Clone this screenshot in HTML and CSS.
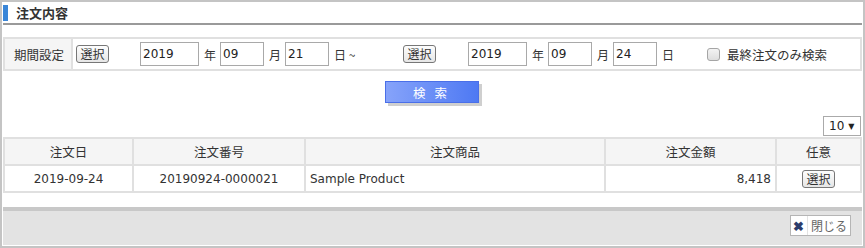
FILE: index.html
```html
<!DOCTYPE html>
<html lang="ja">
<head>
  <meta charset="UTF-8">
  <title>注文内容</title>
  <link rel="stylesheet" href="styles.css">
</head>
<body>
<div class="panel">
  <h2 class="panel-title">注文内容</h2>

  <div class="search">
    <div class="search-label">期間設定</div>
    <div class="search-fields">
      <button class="btn-pick">選択</button>
      <span class="date from">
        <input class="in-year" value="2019"><span class="unit">年</span>
        <input class="in-md" value="09"><span class="unit">月</span>
        <input class="in-md" value="21"><span class="unit end">日 ~</span>
      </span>
      <button class="btn-pick">選択</button>
      <span class="date to">
        <input class="in-year" value="2019"><span class="unit">年</span>
        <input class="in-md" value="09"><span class="unit">月</span>
        <input class="in-md" value="24"><span class="unit end">日</span>
      </span>
      <label class="last-only"><i class="chk"></i>最終注文のみ検索</label>
    </div>
  </div>

  <div class="search-action">
    <button class="btn-search">検 索</button>
  </div>

  <div class="pager">
    <span class="per-page">10 <b>&#9660;</b></span>
  </div>

  <table class="orders">
    <thead>
      <tr>
        <th class="c-date">注文日</th>
        <th class="c-no">注文番号</th>
        <th class="c-item">注文商品</th>
        <th class="c-price">注文金額</th>
        <th class="c-opt">任意</th>
      </tr>
    </thead>
    <tbody>
      <tr>
        <td class="center">2019-09-24</td>
        <td class="center">20190924-0000021</td>
        <td>Sample Product</td>
        <td class="right">8,418</td>
        <td class="center"><button class="btn-pick small">選択</button></td>
      </tr>
    </tbody>
  </table>

  <div class="footer">
    <button class="btn-close"><span class="x">&#10006;</span><span class="lbl">閉じる</span></button>
  </div>
</div>
</body>
</html>
```

FILE: styles.css
```css
* {
  box-sizing: border-box;
}

body {
  margin: 0;
  font-family: "Noto Sans CJK JP", "Noto Sans", sans-serif;
  font-size: 12px;
  color: #333;
  background: #fff;
}

.panel {
  width: 865px;
  height: 248px;
  border: 2px solid #c4c4c4;
  padding: 0 1px;
  display: flex;
  flex-direction: column;
}

.panel-title {
  margin: 3px 0 0;
  height: 20px;
  font-size: 13px;
  font-weight: bold;
  line-height: 16px;
  padding-left: 13px;
  position: relative;
  border-bottom: 2px solid #9a9a9a;
}
.panel-title::before {
  content: "";
  position: absolute;
  left: 0;
  top: 0;
  width: 5px;
  height: 16px;
  background: #3a86d8;
}

/* search box */
.search {
  margin-top: 12px;
  height: 34px;
  border: 2px solid #e0e0e0;
  display: flex;
  align-items: stretch;
  white-space: nowrap;
}
.search-label {
  width: 68px;
  flex: none;
  background: #f5f5f5;
  border-right: 2px solid #e0e0e0;
  display: flex;
  align-items: center;
  padding-left: 9px;
  font-size: 12.5px;
}
.search-fields {
  display: flex;
  align-items: center;
  flex: 1;
  padding-left: 3px;
}

.btn-pick {
  flex: none;
  font-family: inherit;
  font-size: 12px;
  color: #333;
  height: 18px;
  width: 33px;
  padding: 0;
  line-height: 14px;
  border: 1px solid #777;
  border-radius: 3px;
  background: linear-gradient(#fdfdfd, #e6e6e6);
}

.date {
  display: flex;
  align-items: center;
  flex: none;
  margin-left: 31px;
}
.date.to {
  margin-left: 32px;
}
.date input {
  font-family: "DejaVu Sans", sans-serif;
  font-size: 12px;
  color: #222;
  height: 24px;
  border: 1px solid #a9a9a9;
  padding: 0 2px;
  margin: 0;
}
.in-year {
  width: 59px;
}
.in-md {
  width: 44px;
}
.unit {
  width: 21px;
  padding-left: 5px;
  font-size: 12px;
}
.from .end {
  width: 74px;
}
.to .end {
  width: 50px;
}

.last-only {
  display: flex;
  align-items: center;
  font-size: 12.5px;
}
.chk {
  width: 13px;
  height: 13px;
  border: 1px solid #a5a5a5;
  border-radius: 3px;
  background: linear-gradient(#f3f3f3, #dedede);
  margin-right: 7px;
}

.search-action {
  display: flex;
  justify-content: center;
  margin-top: 10px;
  padding-right: 2px;
}
.btn-search {
  width: 94px;
  height: 22px;
  border: 1px solid #4a6fe8;
  background: linear-gradient(to right, #86a3fa, #4e79f3);
  color: #fff;
  font-family: inherit;
  font-size: 12.5px;
  letter-spacing: 3px;
  padding: 0;
  box-shadow: 3px 3px 0 #cfcfcf;
}

.pager {
  display: flex;
  justify-content: flex-end;
  margin-top: 13px;
  padding-right: 1px;
}
.per-page {
  width: 38px;
  height: 20px;
  border: 1px solid #aaa;
  display: flex;
  align-items: center;
  padding-left: 5px;
  font-family: "DejaVu Sans", sans-serif;
  font-size: 12px;
  color: #222;
}
.per-page b {
  font-size: 8px;
  margin-left: 4px;
}

/* orders table */
.orders {
  margin-top: 1px;
  border-collapse: collapse;
  width: 859px;
}
.orders th,
.orders td {
  border: 2px solid #e0e0e0;
  height: 27px;
  padding: 0 4px;
  font-weight: normal;
}
.orders th {
  background: #f5f5f5;
  font-size: 12.5px;
}
.orders td {
  font-family: "DejaVu Sans", "Noto Sans CJK JP", sans-serif;
  font-size: 12px;
}
.c-date { width: 129px; }
.c-no { width: 172px; }
.c-item { width: 300px; }
.c-price { width: 171px; }
.orders .center { text-align: center; }
.orders .right { text-align: right; }
.btn-pick.small {
  font-family: "Noto Sans CJK JP", sans-serif;
}

.footer {
  margin-top: 14px;
  flex: 1;
  margin-bottom: 1px;
  background: #e3e3e3;
  border-top: 4px solid #c8c8c8;
  display: flex;
  justify-content: flex-end;
  align-items: flex-start;
  padding: 4px 11px 0 0;
}
.btn-close {
  display: flex;
  align-items: center;
  height: 21px;
  padding: 0;
  border: 1px solid #b5b5b5;
  background: #fff;
  font-family: inherit;
}
.btn-close .x {
  width: 17px;
  color: #2d3d6b;
  font-size: 13px;
  font-weight: bold;
  border-right: 1px solid #e3e3e3;
  height: 100%;
  display: flex;
  align-items: center;
  justify-content: center;
}
.btn-close .lbl {
  padding: 0 3px;
  color: #666;
  font-size: 12px;
}
```
